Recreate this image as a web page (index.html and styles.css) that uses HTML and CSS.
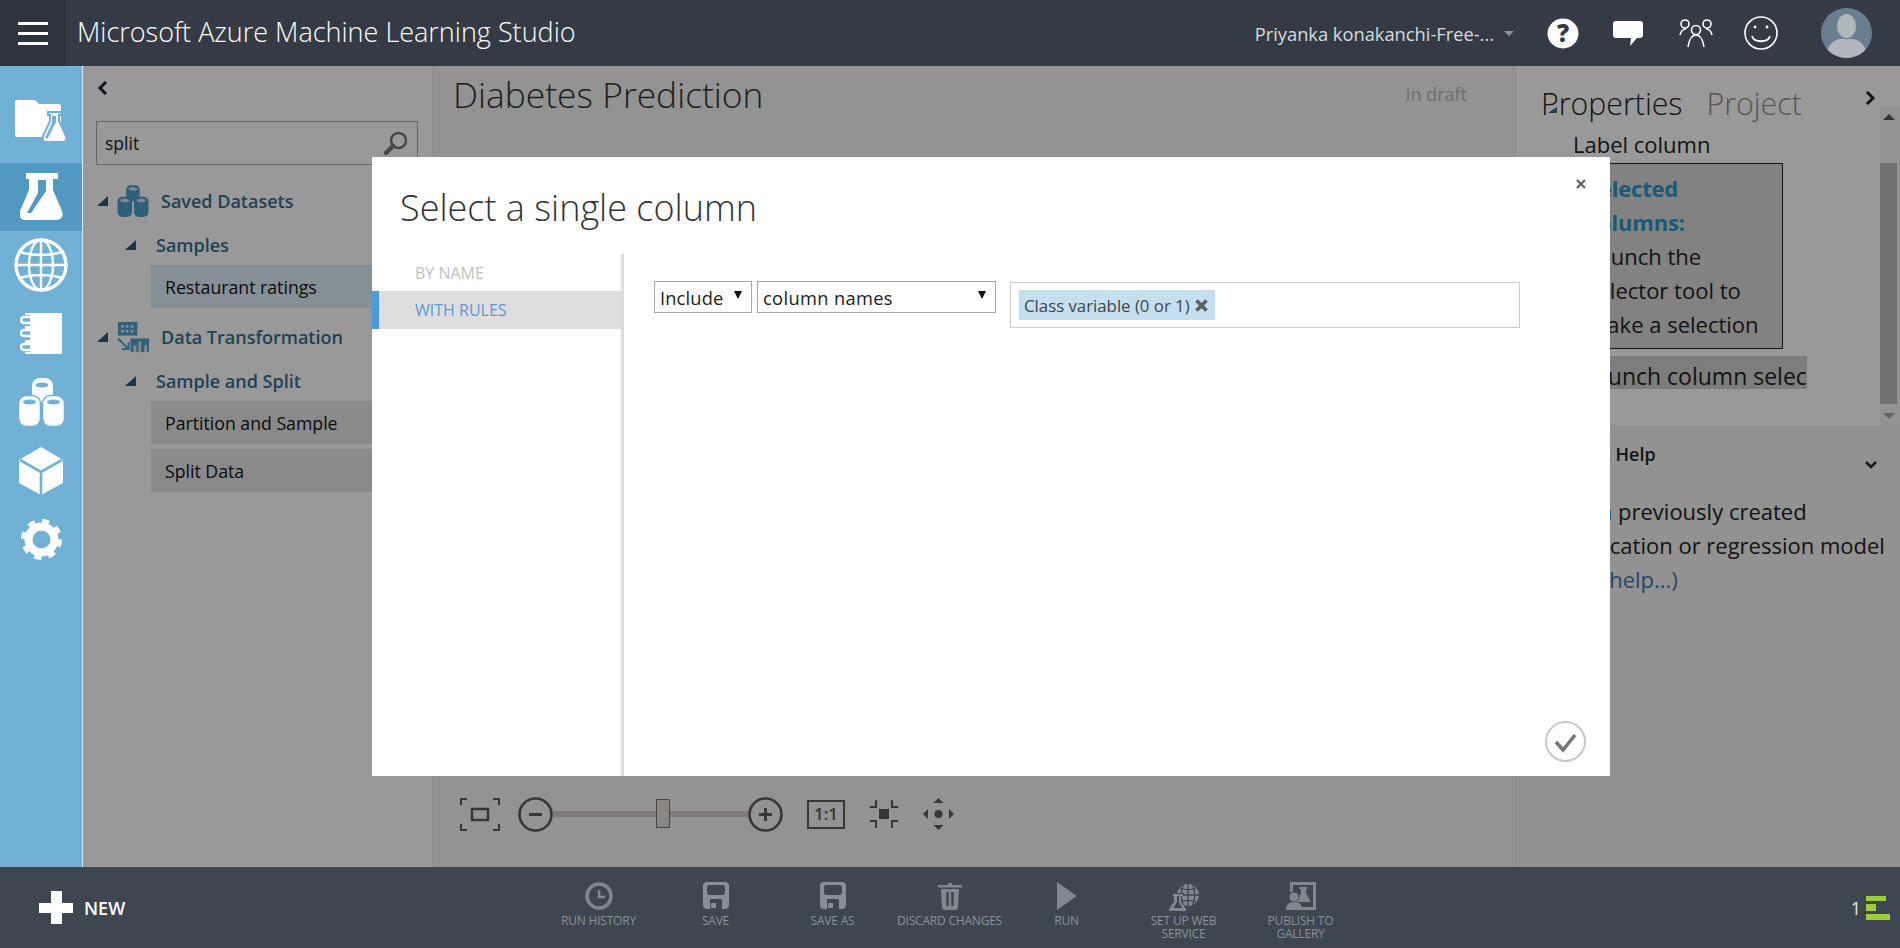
FILE: index.html
```html
<!DOCTYPE html>
<html lang="en">
<head>
  <meta charset="UTF-8" />
  <title>Microsoft Azure Machine Learning Studio</title>
  <link rel="stylesheet" href="styles.css">
</head>
<body>

  <header class="topbar">
    <button class="menu-btn" aria-label="Menu"><span></span><span></span><span></span></button>
    <div class="app-title">Microsoft Azure Machine Learning Studio</div>
    <div class="account">Priyanka konakanchi-Free-...</div>
    <span class="account-caret"></span>
    <svg class="top-icon help" viewBox="1547 17 32 31"><ellipse cx="1563" cy="32.5" rx="15.5" ry="15" fill="#fff"/><text x="1563" y="41" text-anchor="middle" class="help-mark">?</text></svg>
    <svg class="top-icon chat" viewBox="1613 22 30 25"><path d="M1616 22h24a3 3 0 0 1 3 3v11a3 3 0 0 1-3 3h-3l-7 8 1-8h-15a3 3 0 0 1-3-3V25a3 3 0 0 1 3-3z" fill="#fff"/></svg>
    <svg class="top-icon people" viewBox="1679 19 34 30" fill="none" stroke="#fff" stroke-width="1.6"><circle cx="1685" cy="25" r="4"/><circle cx="1707" cy="25" r="4"/><circle cx="1696" cy="31" r="4.5"/><path d="M1680 36c1-4 3-6 6-6M1712 36c-1-4-3-6-6-6M1688 48c1-7 4-12 8-12s7 5 8 12"/></svg>
    <svg class="top-icon smile" viewBox="1744 16 34 34" fill="none" stroke="#fff" stroke-width="1.6"><circle cx="1761" cy="33" r="16"/><path d="M1752 36c2 7 16 7 18 0" stroke-width="1.8"/><circle cx="1755" cy="27" r="1.4" fill="#fff" stroke="none"/><circle cx="1767" cy="27" r="1.4" fill="#fff" stroke="none"/></svg>
    <svg class="avatar" viewBox="0 0 51 50"><defs><clipPath id="avatar-clip"><ellipse cx="25.5" cy="25" rx="25.5" ry="25"/></clipPath></defs><g clip-path="url(#avatar-clip)"><rect width="51" height="50" fill="#6b7e90"/><ellipse cx="25.5" cy="18" rx="9.5" ry="12" fill="#b2b7bc"/><path d="M5 50c0-13 8-18 14-19h13c6 1 14 6 14 19z" fill="#b2b7bc"/></g></svg>
  </header>

  <div class="main">
    <nav class="rail">
      <div class="rail-item raised">
        <svg width="53" height="42" viewBox="15 100 53 42"><path d="M15 102a2 2 0 0 1 2-2h18l4 4h20a2 2 0 0 1 2 2v29a2 2 0 0 1-2 2H17a2 2 0 0 1-2-2z" fill="#fff"/><path d="M48 112h13v3h-2v6l7 15c1 3 0 6-3 6H46c-3 0-4-3-3-6l7-15v-6h-2z" fill="#fff" stroke="#71b1d5" stroke-width="2"/><path d="M52 116h4v6l-8 16h-3l7-15z" fill="#71b1d5"/></svg>
      </div>
      <div class="rail-item selected">
        <svg width="43" height="47" viewBox="19 173 43 47"><path d="M25 173h32v6h-5v11l9 21c2 5-1 9-5 9H24c-4 0-7-4-5-9l9-21v-11h-3z" fill="#fff"/><path d="M37 180h8v11l-15 22h-4l11-20z" fill="#5199c1"/></svg>
      </div>
      <div class="rail-item">
        <svg width="54" height="54" viewBox="14 238 54 54" fill="none" stroke="#fff" stroke-width="2.4"><circle cx="41" cy="265" r="25" stroke-width="3.4"/><ellipse cx="41" cy="265" rx="12" ry="25"/><path d="M41 240v50M16 265h50M20 252c12 4 30 4 42 0M20 278c12-4 30-4 42 0"/></svg>
      </div>
      <div class="rail-item">
        <svg width="42" height="41" viewBox="20 312 42 41"><rect x="25" y="312" width="37" height="41" rx="1" fill="#fff"/><g fill="#71b1d5"><rect x="20" y="314" width="10" height="11"/><rect x="20" y="328" width="10" height="11"/><rect x="20" y="342" width="10" height="9"/></g><g fill="none" stroke="#fff" stroke-width="2.6"><path d="M30 316h-6a2.500 2.500 0 0 0 0 6h6M30 329h-6a2.500 2.500 0 0 0 0 6h6M30 343h-6a2.500 2.500 0 0 0 0 6h6"/></g></svg>
      </div>
      <div class="rail-item">
        <svg width="45" height="48" viewBox="17 378 45 48"><g fill="#fff"><rect x="30" y="378" width="21" height="24" rx="8"/></g><g fill="#fff" stroke="#71b1d5" stroke-width="1.500"><rect x="16.500" y="395.500" width="22" height="31" rx="8"/><rect x="40.500" y="395.500" width="22" height="31" rx="8"/></g><g fill="#71b1d5"><ellipse cx="40" cy="385" rx="6.500" ry="2.600"/><ellipse cx="27.500" cy="402" rx="6.500" ry="2.600"/><ellipse cx="51.500" cy="402" rx="6.500" ry="2.600"/></g></svg>
      </div>
      <div class="rail-item">
        <svg width="44" height="48" viewBox="19 447 44 48"><path d="M41 447l22 13v23l-22 12-22-12v-23z" fill="#fff"/><path d="M20 460l21 12 21-12M41 472v23" fill="none" stroke="#71b1d5" stroke-width="2.6"/></svg>
      </div>
      <div class="rail-item">
        <svg width="41" height="41" viewBox="20 519 41 41" fill="none" stroke="#fff"><circle cx="40.500" cy="539.500" r="13" stroke-width="8"/><circle cx="40.500" cy="539.500" r="18" stroke-width="5" stroke-dasharray="7 7.140"/></svg>
      </div>
    </nav>

    <div class="workspace">
      <aside class="palette">
        <div class="collapse-row">
          <svg class="chevron" viewBox="0 0 11 14"><path d="M9 1L3 7l6 6" fill="none" stroke="#1d2a33" stroke-width="3"/></svg>
        </div>
        <div class="search">
          <span>split</span>
          <svg class="search-icon" viewBox="0 0 24 24" fill="none" stroke="#777"><circle cx="14.500" cy="9.500" r="7.500" stroke-width="2.500"/><path d="M9 15l-7 7" stroke-width="4.500" stroke-linecap="round"/></svg>
        </div>
        <div class="tree-row top first">
          <i class="tree-arrow"></i>
          <svg class="tree-icon" viewBox="117 187 32 33"><g fill="#4e9fce"><rect x="126" y="187" width="14" height="17" rx="5"/><rect x="117" y="199" width="15" height="21" rx="5"/><rect x="134" y="199" width="15" height="21" rx="5"/></g><g fill="#d9e3ea"><ellipse cx="133" cy="191" rx="4.500" ry="1.800"/><ellipse cx="124.500" cy="203" rx="4.500" ry="1.800"/><ellipse cx="141.500" cy="203" rx="4.500" ry="1.800"/></g></svg>
          <span>Saved Datasets</span>
        </div>
        <div class="tree-row sub">
          <i class="tree-arrow"></i>
          <span>Samples</span>
        </div>
        <div class="tree-item accent">Restaurant ratings</div>
        <div class="tree-row top">
          <i class="tree-arrow"></i>
          <svg class="tree-icon" viewBox="117 324 33 31"><rect x="118" y="324" width="20" height="14" fill="#4e9fce"/><g fill="#d9e3ea"><rect x="121" y="327" width="3" height="3"/><rect x="126" y="327" width="3" height="3"/><rect x="131" y="327" width="3" height="3"/><rect x="121" y="332" width="3" height="3"/><rect x="126" y="332" width="3" height="3"/><rect x="131" y="332" width="3" height="3"/></g><rect x="131" y="341" width="19" height="14" fill="#4e9fce"/><g fill="#d9e3ea"><rect x="134" y="348" width="3" height="7"/><rect x="139" y="344" width="3" height="11"/><rect x="145" y="348" width="3" height="7"/></g><path d="M118 341l10 10M129 345v7h-7" fill="none" stroke="#4e9fce" stroke-width="2"/></svg>
          <span>Data Transformation</span>
        </div>
        <div class="tree-row sub">
          <i class="tree-arrow"></i>
          <span>Sample and Split</span>
        </div>
        <div class="tree-item">Partition and Sample</div>
        <div class="tree-item next">Split Data</div>
      </aside>

      <section class="canvas">
        <div class="canvas-head">
          <div class="experiment-name">Diabetes Prediction</div>
          <div class="experiment-status">In draft</div>
        </div>
        <div class="zoom-bar">
          <svg class="zoom-fit" width="40" height="33" viewBox="0 0 40 33" fill="none" stroke="#5c5c5c" stroke-width="2"><path d="M1 7V1h6M33 1h6v6M1 26v6h6M33 32h6v-6"/><rect x="12" y="11" width="16" height="11" stroke-width="2.500"/></svg>
          <div class="zoom-slider">
            <svg width="35" height="35" viewBox="0 0 35 35" fill="none" stroke="#5c5c5c" stroke-width="2.600"><circle cx="17.500" cy="17.500" r="16"/><path d="M11 17.500h13" stroke-width="3"/></svg>
            <div class="zoom-track"><span class="zoom-thumb"></span></div>
            <svg width="35" height="35" viewBox="0 0 35 35" fill="none" stroke="#5c5c5c" stroke-width="2.600"><circle cx="17.500" cy="17.500" r="16"/><path d="M11 17.500h13M17.500 11v13" stroke-width="3"/></svg>
          </div>
          <div class="zoom-one">1:1</div>
          <svg width="30" height="30" viewBox="0 0 30 30" fill="none" stroke="#5c5c5c" stroke-width="2"><rect x="10" y="10" width="10" height="10" fill="#5c5c5c" stroke="none"/><path d="M1 8h6V1M23 1v7h6M1 22h6v7M23 29v-7h6"/></svg>
          <svg width="31" height="32" viewBox="0 0 31 32" fill="#5c5c5c"><circle cx="15.500" cy="16" r="4"/><path d="M15.500 0l5 5h-10zM15.500 32l5-5h-10zM0 16l5-5v10zM31 16l-5-5v10z"/></svg>
        </div>
      </section>

      <aside class="props">
        <div class="props-top">
          <div class="props-main">
            <div class="props-tabs">
              <span class="tab active">Properties</span>
              <span class="tab">Project</span>
              <svg class="chevron right" viewBox="0 0 11 14"><path d="M2 1l6 6-6 6" fill="none" stroke="#1d2a33" stroke-width="3"/></svg>
              <i class="tab-mark"></i>
            </div>
            <div class="field-label">Label column</div>
            <div class="selected-box">
              <strong>Selected<br>columns:</strong><br>Launch the<br>selector tool to<br>make a selection
            </div>
            <div class="launch-btn"><span>Launch column selector</span></div>
          </div>
          <div class="scrollbar">
            <i class="scroll-up"></i>
            <div class="scroll-thumb"></div>
            <i class="scroll-down"></i>
          </div>
        </div>
        <div class="props-help">
          <div class="help-head">
            <span>Quick Help</span>
            <svg class="help-chevron" viewBox="0 0 12 8"><path d="M1 1l5 5 5-5" fill="none" stroke="#1d2a33" stroke-width="2.500"/></svg>
          </div>
          <p>Train a previously created<br>classification or regression model<br><a href="#">(more help...)</a></p>
        </div>
      </aside>

      <div class="dim"></div>
    </div>
  </div>

  <footer class="bottombar">
    <div class="new-btn">
      <span class="new-plus"></span>
      <span>NEW</span>
    </div>
    <div class="actions">
      <div class="action">
        <svg viewBox="0 0 28 28" fill="none" stroke="#7f878f"><circle cx="14" cy="14" r="12" stroke-width="3.500"/><path d="M14 8v7h6" stroke-width="2.500"/></svg>
        <span>RUN HISTORY</span>
      </div>
      <div class="action">
        <svg viewBox="0 0 28 28"><rect x="1" y="0" width="26" height="27" rx="4" fill="#878e96"/><rect x="5" y="3" width="18" height="10" rx="3" fill="#3e4650"/><path d="M8 27v-9a1 1 0 0 1 1-1h10a1 1 0 0 1 1 1v9z" fill="#3e4650"/><rect x="9" y="21" width="5" height="5" fill="#878e96"/></svg>
        <span>SAVE</span>
      </div>
      <div class="action">
        <svg viewBox="0 0 28 28"><rect x="1" y="0" width="26" height="27" rx="4" fill="#878e96"/><rect x="5" y="3" width="18" height="10" rx="3" fill="#3e4650"/><path d="M8 27v-9a1 1 0 0 1 1-1h10a1 1 0 0 1 1 1v9z" fill="#3e4650"/><rect x="9" y="21" width="5" height="5" fill="#878e96"/></svg>
        <span>SAVE AS</span>
      </div>
      <div class="action">
        <svg viewBox="0 0 28 28" fill="#7f878f"><path d="M12 1h4v2h10v2.500H2V3h10zM5 7h18l-1 18a3 3 0 0 1-3 3H9a3 3 0 0 1-3-3z"/><path d="M11.500 10v14M16.500 10v14" stroke="#3e4650" stroke-width="2.500"/></svg>
        <span>DISCARD CHANGES</span>
      </div>
      <div class="action">
        <svg viewBox="0 0 28 28"><path d="M4 0l20 14L4 28z" fill="#7f878f"/></svg>
        <span>RUN</span>
      </div>
      <div class="action">
        <svg class="wide" viewBox="0 0 34 28"><circle cx="21" cy="13" r="11" fill="#7f878f"/><path d="M21 2v22M10 13h22M13 6c5 2 11 2 16 0M13 20c5-2 11-2 16 0M16 3c-2 6-2 14 0 20M26 3c2 6 2 14 0 20" fill="none" stroke="#3e4650" stroke-width="1.300"/><path d="M6 11h11v3h-2v5l5 8c1 2 0 3-2 3H3c-2 0-3-1-2-3l5-8v-5z" fill="#3e4650"/><path d="M6 12h10v2h-2v5.500l5 7.500c.7 1.500 0 2-1.500 2h-14c-1.500 0-2.200-.5-1.500-2l5-7.500V14H6z" fill="#7f878f"/><path d="M10 14h2v6l3 6H6.500l3.500-6z" fill="#3e4650"/></svg>
        <span>SET UP WEB<br>SERVICE</span>
      </div>
      <div class="action">
        <svg viewBox="0 0 28 28"><path d="M3 0h26v28H15v-3h11V3H6v7H3z" fill="#7f878f"/><path d="M12 5h8v2h-1v4l4 7v2H10v-2l4-7V7h-2z" fill="#7f878f"/><circle cx="7" cy="15" r="5" fill="#7f878f" stroke="#3e4650"/><path d="M-1 28c0-5 2-8 8-8s8 3 8 8z" fill="#7f878f"/></svg>
        <span>PUBLISH TO<br>GALLERY</span>
      </div>
    </div>
    <div class="status">
      <span class="status-count">1</span>
      <div class="status-bars"><i class="bar-a"></i><i class="bar-b"></i><i class="bar-c"></i></div>
    </div>
  </footer>

  <div class="modal">
    <svg class="modal-close" viewBox="0 0 10 10"><path d="M1 1l8 8M9 1l-8 8" stroke="#666" stroke-width="2.400"/></svg>
    <h2>Select a single column</h2>
    <div class="modal-body">
      <ul class="modal-nav">
        <li>BY NAME</li>
        <li class="active">WITH RULES</li>
      </ul>
      <div class="rule-row">
        <div class="picker include">Include<i></i></div>
        <div class="picker names">column names<i></i></div>
        <div class="tag-box">
          <span class="chip">Class variable (0 or 1)
            <svg viewBox="0 0 12 12"><path d="M2 2l8 8M10 2l-8 8" stroke="#5f5f5f" stroke-width="3"/></svg>
          </span>
        </div>
      </div>
    </div>
    <svg class="modal-ok" viewBox="0 0 41 41" fill="none"><circle cx="20.500" cy="20.500" r="19.500" stroke="#c8c8c8" stroke-width="2"/><path d="M11 21l7 8 12-15" stroke="#777" stroke-width="3.500"/></svg>
  </div>

</body>
</html>
```

FILE: styles.css
```css
* {
  box-sizing: border-box;
}
html, body {
  margin: 0;
  height: 948px;
  overflow: hidden;
}
body {
  position: relative;
  display: flex;
  flex-direction: column;
  width: 1900px;
  font-family: "Open Sans", "Noto Sans", sans-serif;
  color: #222;
}

/* top bar */
.topbar {
  height: 66px;
  flex: none;
  display: flex;
  align-items: center;
  padding-right: 28px;
  background: #343b45;
  color: #fff;
}
.menu-btn {
  width: 66px;
  height: 66px;
  padding: 0 18px;
  border: none;
  background: #2d343d;
  display: flex;
  flex-direction: column;
  justify-content: center;
  gap: 7px;
}
.menu-btn span {
  display: block;
  height: 3px;
  width: 30px;
  background: #fff;
}
.app-title {
  margin-left: 11px;
  padding-bottom: 4px;
  font-size: 27px;
  font-weight: 300;
  white-space: nowrap;
}
.account {
  margin-left: auto;
  font-size: 18.3px;
  color: #d8dbde;
  white-space: nowrap;
}
.account-caret {
  margin-left: 10px;
  border: 5px solid transparent;
  border-top: 5px solid #8b929a;
  border-bottom: none;
}
.top-icon {
  flex: none;
}
.help {
  width: 32px;
  height: 31px;
  margin-left: 33px;
}
.help-mark {
  font-family: "Open Sans", sans-serif;
  font-size: 24px;
  font-weight: 800;
  fill: #343b45;
}
.chat {
  width: 30px;
  height: 25px;
  margin-left: 34px;
}
.people {
  width: 34px;
  height: 30px;
  margin-left: 36px;
}
.smile {
  width: 34px;
  height: 34px;
  margin-left: 31px;
}
.avatar {
  width: 51px;
  height: 50px;
  margin-left: 43px;
}

/* left rail and workspace */
.main {
  flex: 1;
  display: flex;
  min-height: 0;
}
.rail {
  width: 83px;
  flex: none;
  padding-top: 28px;
  background: #71b1d5;
  border-right: 1px solid #dfe9ef;
}
.rail-item {
  height: 68.5px;
  display: flex;
  align-items: center;
  justify-content: center;
}
.rail-item.selected {
  background: #5199c1;
}
.rail-item.raised {
  padding-bottom: 14px;
}
.workspace {
  flex: 1;
  position: relative;
  display: flex;
  min-width: 0;
}
.dim {
  position: absolute;
  inset: 0;
  background: rgba(0, 0, 0, 0.4);
}

/* palette */
.palette {
  width: 349px;
  flex: none;
  padding: 0 14px 0 13px;
  background: #fff;
  font-size: 17.7px;
  overflow: hidden;
}
.collapse-row {
  height: 55px;
  padding-top: 15px;
}
.chevron {
  display: block;
  width: 11px;
  height: 14px;
  margin-left: 1px;
}
.search {
  height: 44px;
  border: 1px solid #aaa;
  padding: 0 8px;
  display: flex;
  align-items: center;
  justify-content: space-between;
  font-size: 17.5px;
}
.search-icon {
  width: 24px;
  height: 24px;
  margin: 0 1px 0 0;
}
.tree-row {
  height: 36px;
  padding-top: 2px;
  display: flex;
  align-items: center;
  font-size: 18px;
  font-weight: 600;
  color: #346e91;
  white-space: nowrap;
}
.tree-row.first {
  margin-top: 17px;
}
.tree-row.top {
  margin-bottom: 8px;
}
.tree-arrow {
  width: 0;
  height: 0;
  flex: none;
  margin-left: 1px;
  border-style: solid;
  border-width: 0 0 10px 11px;
  border-color: transparent transparent #305a75 transparent;
}
.tree-icon {
  width: 32px;
  height: 32px;
  margin: 0 12px 0 9px;
  flex: none;
}
.tree-row.sub {
  padding-left: 28px;
}
.tree-row.sub span {
  margin-left: 20px;
}
.tree-item {
  height: 43px;
  margin: 3px 0 0 55px;
  padding-left: 14px;
  display: flex;
  align-items: center;
  background: #e6e6e6;
  color: #111;
  white-space: nowrap;
}
.tree-item.accent {
  background: #dcf0fa;
  margin-bottom: 10px;
}
.tree-item.next {
  margin-top: 5px;
}

/* canvas */
.canvas {
  flex: 1;
  display: flex;
  flex-direction: column;
  justify-content: space-between;
  background: #f5f5f5;
  border-left: 1px solid #ebebeb;
  min-width: 0;
}
.canvas-head {
  height: 55px;
  padding: 0 48px 0 20px;
  display: flex;
  align-items: center;
  justify-content: space-between;
}
.experiment-name {
  font-size: 35.4px;
  font-weight: 300;
  color: #333;
}
.experiment-status {
  font-size: 18px;
  color: #b8b8b8;
}
.zoom-bar {
  display: flex;
  align-items: center;
  gap: 24px;
  height: 34px;
  margin: 0 0 36px 27px;
}
.zoom-fit {
  margin-right: -6px;
}
.zoom-slider {
  display: flex;
  align-items: center;
}
.zoom-track {
  position: relative;
  width: 195px;
  height: 6px;
  background: #d4cbc6;
}
.zoom-thumb {
  position: absolute;
  left: 103px;
  top: -12px;
  width: 14px;
  height: 29px;
  background: #e6e0dc;
  border: 1px solid #7c7672;
}
.zoom-one {
  width: 38px;
  height: 29px;
  border: 2.5px solid #5c5c5c;
  color: #5c5c5c;
  font-size: 17px;
  font-weight: 600;
  line-height: 24px;
  text-align: center;
}

/* properties panel */
.props {
  width: 385px;
  flex: none;
  display: flex;
  flex-direction: column;
  border-left: 1px solid #ececec;
  background: #fff;
  overflow: hidden;
}
.props-top {
  height: 359px;
  flex: none;
  display: flex;
}
.props-main {
  flex: 1;
  min-width: 0;
}
.props-tabs {
  position: relative;
  height: 40px;
  margin-top: 17px;
  padding: 0 4px 0 25px;
  display: flex;
  align-items: center;
  gap: 24px;
  white-space: nowrap;
}
.tab {
  font-size: 30.3px;
  font-weight: 300;
  color: #8f8f8f;
}
.tab.active {
  color: #222;
}
.chevron.right {
  margin-left: auto;
  align-self: flex-start;
  margin-top: 8px;
}
.tab-mark {
  position: absolute;
  left: 32px;
  top: 24px;
  border-style: solid;
  border-width: 0 0 6px 9px;
  border-color: transparent transparent #35678a transparent;
}
.field-label {
  height: 30px;
  margin: 6px 0 4px 57px;
  font-size: 22px;
  line-height: 30px;
}
.selected-box {
  width: 222px;
  height: 186px;
  margin-left: 45px;
  padding: 7px 0 0 25px;
  border: 1px solid #222;
  background: #d9d9d9;
  font-size: 22px;
  line-height: 34px;
  white-space: nowrap;
}
.selected-box strong {
  letter-spacing: -0.2px;
  color: #2b95c8;
}
.launch-btn {
  width: 290px;
  height: 33px;
  margin: 7px 0 0 1px;
  padding-left: 66px;
  background: #d0d0d0;
  font-size: 23px;
  line-height: 41px;
  white-space: nowrap;
  overflow: hidden;
}
.scrollbar {
  width: 20px;
  margin-top: 41px;
  display: flex;
  flex-direction: column;
  align-items: center;
  padding-right: 3px;
  background: #f6f6f6;
}
.scroll-up, .scroll-down {
  border-left: 6px solid transparent;
  border-right: 6px solid transparent;
}
.scroll-up {
  margin: 7px 0 0;
  border-bottom: 6px solid #555;
}
.scroll-thumb {
  width: 17px;
  height: 241px;
  margin-top: 43px;
  background: #bcbcbc;
}
.scroll-down {
  margin-top: 9px;
  border-top: 6px solid #aaa;
}
.props-help {
  flex: 1;
  background: #f3f3f3;
  white-space: nowrap;
}
.help-head {
  display: flex;
  margin: 17px 23px 0 45px;
  height: 24px;
  font-size: 18px;
  font-weight: 600;
  line-height: 24px;
}
.help-chevron {
  margin-left: auto;
  align-self: flex-end;
  margin-bottom: -3px;
  width: 12px;
  height: 8px;
}
.props-help p {
  margin: 28px 0 0 26px;
  font-size: 22px;
  line-height: 34px;
}
.props-help a {
  color: #3b7ab0;
  text-decoration: none;
}

/* bottom bar */
.bottombar {
  height: 81px;
  flex: none;
  display: flex;
  padding-right: 10px;
  background: #3e4650;
  color: #fff;
}
.new-btn {
  width: 540px;
  flex: none;
  padding-left: 39px;
  display: flex;
  align-items: center;
  gap: 11px;
  font-size: 18px;
  font-weight: 600;
}
.new-plus {
  width: 34px;
  height: 33px;
  background: linear-gradient(#fff, #fff) center / 100% 10px no-repeat, linear-gradient(#fff, #fff) center / 11px 100% no-repeat;
}
.actions {
  display: flex;
  padding-top: 15px;
}
.action {
  width: 117px;
  display: flex;
  flex-direction: column;
  align-items: center;
  color: #8a9198;
  font-size: 12px;
  line-height: 13px;
  letter-spacing: -0.2px;
  text-align: center;
  white-space: nowrap;
}
.action svg {
  width: 28px;
  height: 28px;
  margin-bottom: 4px;
  overflow: visible;
}
.action svg.wide {
  width: 34px;
}
.status {
  margin-left: auto;
  display: flex;
  align-items: center;
  gap: 5px;
  font-size: 18px;
  color: #e6e6e6;
}
.status-bars {
  width: 24px;
  display: flex;
  flex-direction: column;
  gap: 3px;
}
.status-bars i {
  display: block;
  background: #9ccf3e;
}
.bar-a {
  width: 20px;
  height: 5px;
}
.bar-b {
  width: 10px;
  height: 7px;
}
.bar-c {
  width: 24px;
  height: 6px;
}

/* dialog */
.modal {
  position: absolute;
  left: 372px;
  top: 157px;
  width: 1238px;
  height: 619px;
  background: #fff;
}
.modal h2 {
  margin: 0;
  padding: 27px 0 0 28px;
  height: 97px;
  font-size: 36px;
  font-weight: 300;
  line-height: 48px;
  color: #333;
}
.modal-close {
  position: absolute;
  right: 24px;
  top: 22px;
  width: 10px;
  height: 10px;
}
.modal-body {
  display: flex;
  height: 522px;
}
.modal-nav {
  width: 252px;
  margin: 0;
  padding: 0;
  list-style: none;
  border-right: 3px solid #ddd;
  flex: none;
  font-size: 16px;
  color: #c2c2c2;
}
.modal-nav li {
  height: 37px;
  padding-left: 43px;
  line-height: 38px;
}
.modal-nav li.active {
  height: 38px;
  padding-left: 36px;
  border-left: 7px solid #4f9bd9;
  background: #dedede;
  color: #5b9bd5;
}
.rule-row {
  padding: 27px 0 0 30px;
  display: flex;
  align-items: flex-start;
  gap: 5px;
  font-size: 18.3px;
}
.picker {
  position: relative;
  height: 32px;
  border: 1px solid #aaa;
  padding-left: 5px;
  line-height: 32px;
  letter-spacing: 0.15px;
  white-space: nowrap;
}
.picker i {
  position: absolute;
  right: 9px;
  top: 9px;
  border-left: 4px solid transparent;
  border-right: 4px solid transparent;
  border-top: 8px solid #111;
}
.include {
  width: 98px;
}
.names {
  width: 239px;
  letter-spacing: 0.35px;
}
.tag-box {
  width: 510px;
  height: 46px;
  margin: 1px 0 0 9px;
  padding: 7px 0 0 8px;
  border: 1px solid #ccc;
}
.chip {
  display: inline-flex;
  align-items: center;
  gap: 4px;
  height: 30px;
  padding: 0 6px 0 5px;
  background: #c4dff0;
  font-size: 16.8px;
  color: #444;
  white-space: nowrap;
}
.chip svg {
  width: 15px;
  height: 15px;
}
.modal-ok {
  position: absolute;
  left: 1173px;
  top: 564px;
  width: 41px;
  height: 41px;
}
```
